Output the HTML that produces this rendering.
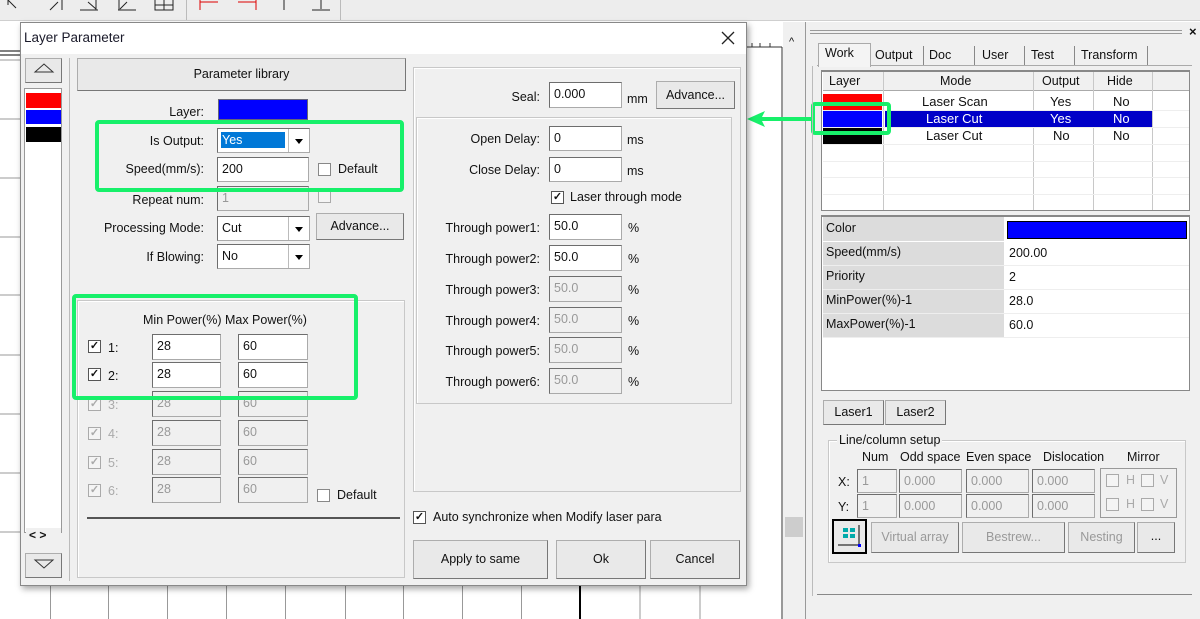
<!DOCTYPE html>
<html><head><meta charset="utf-8"><style>
*{box-sizing:border-box;margin:0;padding:0}
body{width:1200px;height:619px;overflow:hidden;background:#fff;font-family:"Liberation Sans",Tahoma,sans-serif;font-size:12.5px;color:#111;position:relative}
.a{position:absolute}
.in{position:absolute;background:#fff;border:1px solid #aaa;border-top-color:#6d6d6d;border-left-color:#6d6d6d;padding:2px 4px;font-size:12.5px;line-height:18px}
.dis{background:#f0f0f0;color:#999}
.btn{position:absolute;background:#e9e9e9;border:1px solid #adadad;border-right-color:#777;border-bottom-color:#777;text-align:center;font-size:12.5px}
.lbl{position:absolute;text-align:right;font-size:12.5px}
.cb{position:absolute;width:13px;height:13px;background:#fff;border:1px solid #555;font-size:11px;line-height:11px;text-align:center;font-weight:bold}
.cbd{border-color:#aaa;color:#aaa;background:#f4f4f4}
.grp{position:absolute;border:1px solid #c8c8c8;box-shadow:inset 1px 1px 0 #fff}
.green{position:absolute;border:4px solid #17f06a;border-radius:4px}
.sel:after{content:"";position:absolute;right:0;top:0;width:20px;height:100%;border-left:1px solid #bbb}
.arr{position:absolute;right:6px;top:10px;border:4px solid transparent;border-top:5px solid #000}
.vl{position:absolute;width:1px;background:#c8c8c8}
.hl{position:absolute;height:1px;background:#c8c8c8}
</style></head><body>
<!-- toolbar -->
<div class="a" style="left:0;top:0;width:1200px;height:21px;background:#ededed;border-bottom:1px solid #cfcfcf"></div>
<div class="a" style="left:186px;top:0;width:1px;height:20px;background:#bbb"></div>
<div class="a" style="left:340px;top:0;width:1px;height:20px;background:#bbb"></div>
<svg class="a" style="left:0;top:0" width="340" height="20"><g stroke="#222" fill="none" stroke-width="1"><path d="M8 0 L16 8 M8 0V5"/><path d="M50 10 L58 2 M62 0V10"/><path d="M80 10 H98 M96 0 V10 M88 2 L96 9"/><path d="M118 10 H136 M119 0V10 M127 2 L120 9"/><path d="M155 0 V10 H173 V0 M164 0 V10 M155 5 H173"/><path d="M200 0 V10 M200 2 H218" stroke="#d00"/><path d="M238 2 H256 M256 0 V10" stroke="#d00"/><path d="M284 0 V10"/><path d="M312 10 H330 M321 0 V9" /></g></svg>
<!-- canvas grid -->
<svg class="a" style="left:0;top:21px" width="810" height="598">
<g stroke="#999" stroke-width="1">
<path d="M0 39H20M0 98H20M0 157H20M0 216H20M0 274H20M0 334H20M0 393H20M0 452H20M0 511H20"/>
<path d="M50.5 565V598M108.5 565V598M167.5 565V598M226.5 565V598M285.5 565V598M345.5 565V598M403.5 565V598M462.5 565V598M521.5 565V598M640 565V598M700 565V598"/>
</g>
<path d="M580 565V598" stroke="#000" stroke-width="2"/>
<path d="M0 30H20M0 34H20" stroke="#000"/>
<path d="M747 26H782M782 26V598" stroke="#333"/>
<path d="M760 22V26M770 22V26M752 22V26" stroke="#333"/>
</g>
</svg>
<div class="a" style="left:783px;top:22px;width:22px;height:597px;background:#f0f0f0"></div>
<div class="a" style="left:789px;top:36px;font-size:11px">^</div>
<div class="a" style="left:785px;top:517px;width:18px;height:20px;background:#cdcdcd"></div>
<!-- right panel -->
<div class="a" style="left:805px;top:22px;width:395px;height:597px;background:#f0f0f0;border-left:1px solid #999"></div>
<div class="a" style="left:810px;top:30px;width:372px;height:4px;border-top:1px solid #999;border-bottom:1px solid #999"></div>
<div class="a" style="left:1189px;top:24px;font-weight:bold;font-size:13px">×</div>
<div class="a" style="left:817px;top:65px;width:375px;height:1px;background:#aaa"></div>
<div class="a" style="left:818px;top:43px;width:53px;height:24px;background:#f4f4f4;border:1px solid #aaa;border-bottom:none;padding:2px 6px">Work</div>
<div class="a" style="left:872px;top:46px;width:52px;height:19px;border-right:1px solid #888;padding:2px 3px">Output</div>
<div class="a" style="left:926px;top:46px;width:49px;height:19px;border-right:1px solid #888;padding:2px 3px">Doc</div>
<div class="a" style="left:977px;top:46px;width:48px;height:19px;border-right:1px solid #888;padding:2px 5px">User</div>
<div class="a" style="left:1027px;top:46px;width:48px;height:19px;border-right:1px solid #888;padding:2px 4px">Test</div>
<div class="a" style="left:1077px;top:46px;width:71px;height:19px;border-right:1px solid #888;padding:2px 4px">Transform</div>
<div class="a" style="left:821px;top:70px;width:369px;height:141px;background:#fff;border:1px solid #888;border-top:2px solid #888"></div>
<div class="a" style="left:823px;top:72px;width:366px;height:19px;background:#f0f0f0;border-bottom:1px solid #aaa"></div>
<div class="a" style="left:829px;top:74px">Layer</div><div class="a" style="left:940px;top:74px">Mode</div><div class="a" style="left:1042px;top:74px">Output</div><div class="a" style="left:1107px;top:74px">Hide</div>
<div class="vl" style="left:883px;top:72px;height:138px"></div><div class="vl" style="left:1033px;top:72px;height:138px"></div><div class="vl" style="left:1093px;top:72px;height:138px"></div><div class="vl" style="left:1152px;top:72px;height:138px"></div>
<div class="hl" style="left:823px;top:110px;width:366px;background:#eee"></div><div class="hl" style="left:823px;top:127px;width:366px;background:#eee"></div><div class="hl" style="left:823px;top:144px;width:366px;background:#eee"></div><div class="hl" style="left:823px;top:161px;width:366px;background:#eee"></div><div class="hl" style="left:823px;top:177px;width:366px;background:#eee"></div><div class="hl" style="left:823px;top:194px;width:366px;background:#eee"></div>
<div class="a" style="left:823px;top:94px;width:59px;height:16px;background:#f00"></div>
<div class="a" style="left:823px;top:111px;width:59px;height:16px;background:#00f"></div>
<div class="a" style="left:885px;top:111px;width:267px;height:16px;background:#0000c8"></div>
<div class="a" style="left:823px;top:128px;width:59px;height:16px;background:#000"></div>
<div class="a" style="left:922px;top:94px;font-size:13px">Laser Scan</div><div class="a" style="left:1050px;top:94px;font-size:13px">Yes</div><div class="a" style="left:1113px;top:94px;font-size:13px">No</div>
<div class="a" style="left:926px;top:111px;font-size:13px;color:#fff">Laser Cut</div><div class="a" style="left:1050px;top:111px;font-size:13px;color:#fff">Yes</div><div class="a" style="left:1113px;top:111px;font-size:13px;color:#fff">No</div>
<div class="a" style="left:926px;top:128px;font-size:13px">Laser Cut</div><div class="a" style="left:1053px;top:128px;font-size:13px">No</div><div class="a" style="left:1113px;top:128px;font-size:13px">No</div>
<div class="green" style="left:811px;top:102px;width:80px;height:33px"></div>
<div class="a" style="left:760px;top:117px;width:52px;height:4px;background:#17f06a"></div>
<svg class="a" style="left:747px;top:110px" width="20" height="18"><path d="M0 9 L18 1 L14 9 L18 17Z" fill="#17f06a"/></svg>
<div class="a" style="left:821px;top:215px;width:369px;height:176px;background:#fff;border:1px solid #888;border-top:2px solid #888"></div>
<div class="a" style="left:823px;top:217px;width:181px;height:120px;background:#dcdcdc"></div>
<div class="a" style="left:1007px;top:221px;width:180px;height:18px;background:#00f;border:1px solid #000"></div>
<div class="hl" style="left:823px;top:241px;width:366px;background:#fff"></div><div class="hl" style="left:823px;top:265px;width:366px;background:#eee"></div><div class="hl" style="left:823px;top:289px;width:366px;background:#eee"></div><div class="hl" style="left:823px;top:313px;width:366px;background:#eee"></div><div class="hl" style="left:823px;top:337px;width:366px;background:#eee"></div>
<div class="a" style="left:826px;top:221px">Color</div>
<div class="a" style="left:826px;top:245px">Speed(mm/s)</div><div class="a" style="left:1009px;top:246px">200.00</div>
<div class="a" style="left:826px;top:269px">Priority</div><div class="a" style="left:1009px;top:270px">2</div>
<div class="a" style="left:826px;top:293px">MinPower(%)-1</div><div class="a" style="left:1009px;top:294px">28.0</div>
<div class="a" style="left:826px;top:317px">MaxPower(%)-1</div><div class="a" style="left:1009px;top:318px">60.0</div>
<div class="btn" style="left:823px;top:400px;width:61px;height:25px;line-height:23px">Laser1</div>
<div class="btn" style="left:885px;top:400px;width:61px;height:25px;line-height:23px">Laser2</div>
<div class="grp" style="left:828px;top:440px;width:358px;height:123px"></div>
<div class="a" style="left:837px;top:433px;background:#f0f0f0;padding:0 2px">Line/column setup</div>
<div class="a" style="left:862px;top:450px">Num</div><div class="a" style="left:900px;top:450px">Odd space</div><div class="a" style="left:966px;top:450px">Even space</div><div class="a" style="left:1043px;top:450px">Dislocation</div><div class="a" style="left:1127px;top:450px">Mirror</div>
<div class="a" style="left:838px;top:475px">X:</div><div class="a" style="left:838px;top:500px">Y:</div>
<div class="in dis" style="left:857px;top:469px;width:40px;height:24px">1</div><div class="in dis" style="left:899px;top:469px;width:63px;height:24px">0.000</div><div class="in dis" style="left:966px;top:469px;width:63px;height:24px">0.000</div><div class="in dis" style="left:1032px;top:469px;width:63px;height:24px">0.000</div>
<div class="in dis" style="left:857px;top:494px;width:40px;height:24px">1</div><div class="in dis" style="left:899px;top:494px;width:63px;height:24px">0.000</div><div class="in dis" style="left:966px;top:494px;width:63px;height:24px">0.000</div><div class="in dis" style="left:1032px;top:494px;width:63px;height:24px">0.000</div>
<div class="a" style="left:1100px;top:468px;width:77px;height:50px;border:1px solid #999"></div>
<div class="cb cbd" style="left:1106px;top:474px"></div><div class="a" style="left:1126px;top:473px;color:#aaa">H</div><div class="cb cbd" style="left:1141px;top:474px"></div><div class="a" style="left:1160px;top:473px;color:#aaa">V</div>
<div class="cb cbd" style="left:1106px;top:498px"></div><div class="a" style="left:1126px;top:497px;color:#aaa">H</div><div class="cb cbd" style="left:1141px;top:498px"></div><div class="a" style="left:1160px;top:497px;color:#aaa">V</div>
<div class="a" style="left:832px;top:519px;width:35px;height:35px;border:2px solid #000;background:#e9e9e9"><svg width="31" height="31"><g fill="#0aa"><rect x="9" y="7" width="5" height="4"/><rect x="16" y="7" width="5" height="4"/><rect x="9" y="13" width="5" height="4"/><rect x="16" y="13" width="5" height="4"/></g><path d="M4 24H26M25 4V24" stroke="#000"/><rect x="24" y="23" width="3" height="3" fill="#00f"/></svg></div>
<div class="btn" style="left:871px;top:522px;width:88px;height:31px;line-height:29px;color:#999">Virtual array</div>
<div class="btn" style="left:962px;top:522px;width:103px;height:31px;line-height:29px;color:#999">Bestrew...</div>
<div class="btn" style="left:1068px;top:522px;width:67px;height:31px;line-height:29px;color:#999">Nesting</div>
<div class="btn" style="left:1137px;top:522px;width:38px;height:31px;line-height:27px">...</div>
<div class="a" style="left:817px;top:594px;width:375px;height:1px;background:#888"></div>
<div class="a" style="left:812px;top:66px;width:1px;height:530px;background:#bbb"></div>

<!-- dialog -->
<div class="a" style="left:20px;top:22px;width:727px;height:564px;background:#f0f0f0;border:1px solid #888;box-shadow:2px 3px 6px rgba(0,0,0,.35)"></div>
<div class="a" style="left:21px;top:23px;width:725px;height:31px;background:#fff"></div>
<div class="a" style="left:24px;top:30px;font-size:13.5px;color:#1a1a2a">Layer Parameter</div>
<svg class="a" style="left:721px;top:31px" width="14" height="14"><path d="M1 1L13 13M13 1L1 13" stroke="#222" stroke-width="1.3"/></svg>
<div class="btn" style="left:25px;top:58px;width:37px;height:25px"><svg width="30" height="20"><path d="M6 13H24L15 5Z" fill="none" stroke="#333"/></svg></div>
<div class="a" style="left:24px;top:88px;width:38px;height:445px;background:#fff;border:1px solid #999"></div>
<div class="a" style="left:26px;top:93px;width:35px;height:15px;background:#f00"></div>
<div class="a" style="left:26px;top:110px;width:35px;height:14px;background:#00f"></div>
<div class="a" style="left:26px;top:127px;width:35px;height:15px;background:#000"></div>
<div class="a" style="left:26px;top:528px;width:35px;height:16px;background:#f0f0f0;font-size:12px;font-weight:bold;padding-left:3px">&lt; &gt;</div>
<div class="btn" style="left:25px;top:553px;width:37px;height:25px"><svg width="30" height="20"><path d="M6 6H24L15 14Z" fill="none" stroke="#333"/></svg></div>
<div class="vl" style="left:69px;top:58px;height:523px;background:#bbb"></div>
<div class="btn" style="left:77px;top:58px;width:329px;height:33px;line-height:31px">Parameter library</div>
<div class="lbl" style="left:100px;width:104px;top:105px">Layer:</div>
<div class="a" style="left:218px;top:99px;width:90px;height:21px;background:#00f;border:1px solid #667"></div>
<div class="lbl" style="left:100px;width:104px;top:134px">Is Output:</div>
<div class="in sel" style="left:217px;top:128px;width:93px;height:25px;padding:0"><div class="a" style="left:3px;top:3px;width:64px;height:16px;background:#0078d7;color:#fff;padding-left:1px;line-height:16px">Yes</div><div class="arr"></div></div>
<div class="lbl" style="left:90px;width:114px;top:162px">Speed(mm/s):</div>
<div class="in" style="left:217px;top:157px;width:92px;height:25px">200</div>
<div class="cb" style="left:318px;top:163px;border-color:#888"></div><div class="a" style="left:338px;top:162px">Default</div>
<div class="lbl" style="left:90px;width:114px;top:193px">Repeat num:</div>
<div class="in dis" style="left:217px;top:186px;width:92px;height:25px">1</div>
<div class="cb cbd" style="left:318px;top:190px"></div>
<div class="lbl" style="left:80px;width:124px;top:221px">Processing Mode:</div>
<div class="in sel" style="left:217px;top:216px;width:93px;height:25px">Cut<div class="arr"></div></div>
<div class="btn" style="left:316px;top:213px;width:88px;height:27px;line-height:25px">Advance...</div>
<div class="lbl" style="left:90px;width:114px;top:250px">If Blowing:</div>
<div class="in sel" style="left:217px;top:244px;width:93px;height:25px">No<div class="arr"></div></div>
<div class="green" style="left:95px;top:120px;width:309px;height:72px"></div>
<!-- power group -->
<div class="grp" style="left:77px;top:300px;width:328px;height:278px"></div>
<div class="a" style="left:143px;top:313px">Min Power(%) Max Power(%)</div>
<div class="cb" style="left:88px;top:340px">✓</div><div class="a" style="left:108px;top:341px">1:</div>
<div class="in" style="left:152px;top:334px;width:69px;height:26px">28</div><div class="in" style="left:238px;top:334px;width:70px;height:26px">60</div>
<div class="cb" style="left:88px;top:368px">✓</div><div class="a" style="left:108px;top:369px">2:</div>
<div class="in" style="left:152px;top:362px;width:69px;height:26px">28</div><div class="in" style="left:238px;top:362px;width:70px;height:26px">60</div>
<div class="cb cbd" style="left:88px;top:398px">✓</div><div class="a" style="left:108px;top:398px;color:#aaa">3:</div>
<div class="in dis" style="left:152px;top:391px;width:69px;height:26px">28</div><div class="in dis" style="left:238px;top:391px;width:70px;height:26px">60</div>
<div class="cb cbd" style="left:88px;top:427px">✓</div><div class="a" style="left:108px;top:427px;color:#aaa">4:</div>
<div class="in dis" style="left:152px;top:420px;width:69px;height:26px">28</div><div class="in dis" style="left:238px;top:420px;width:70px;height:26px">60</div>
<div class="cb cbd" style="left:88px;top:456px">✓</div><div class="a" style="left:108px;top:456px;color:#aaa">5:</div>
<div class="in dis" style="left:152px;top:449px;width:69px;height:26px">28</div><div class="in dis" style="left:238px;top:449px;width:70px;height:26px">60</div>
<div class="cb cbd" style="left:88px;top:484px">✓</div><div class="a" style="left:108px;top:484px;color:#aaa">6:</div>
<div class="in dis" style="left:152px;top:477px;width:69px;height:26px">28</div><div class="in dis" style="left:238px;top:477px;width:70px;height:26px">60</div>
<div class="cb" style="left:317px;top:489px;border-color:#888"></div><div class="a" style="left:337px;top:488px">Default</div>
<div class="a" style="left:87px;top:517px;width:313px;height:2px;background:#555"></div>
<div class="green" style="left:72px;top:294px;width:286px;height:106px"></div>
<!-- right group -->
<div class="grp" style="left:413px;top:67px;width:328px;height:425px"></div>
<div class="lbl" style="left:480px;width:60px;top:90px">Seal:</div>
<div class="in" style="left:549px;top:82px;width:73px;height:26px">0.000</div><div class="a" style="left:627px;top:92px">mm</div>
<div class="btn" style="left:656px;top:81px;width:79px;height:28px;line-height:26px">Advance...</div>
<div class="grp" style="left:416px;top:117px;width:316px;height:287px"></div>
<div class="lbl" style="left:440px;width:100px;top:132px">Open Delay:</div>
<div class="in" style="left:549px;top:126px;width:73px;height:25px">0</div><div class="a" style="left:627px;top:133px">ms</div>
<div class="lbl" style="left:440px;width:100px;top:163px">Close Delay:</div>
<div class="in" style="left:549px;top:157px;width:73px;height:25px">0</div><div class="a" style="left:627px;top:164px">ms</div>
<div class="cb" style="left:551px;top:191px">✓</div><div class="a" style="left:570px;top:190px">Laser through mode</div>
<div class="lbl" style="left:420px;width:120px;top:221px">Through power1:</div><div class="in" style="left:549px;top:214px;width:73px;height:26px">50.0</div><div class="a" style="left:628px;top:221px">%</div>
<div class="lbl" style="left:420px;width:120px;top:252px">Through power2:</div><div class="in" style="left:549px;top:245px;width:73px;height:26px">50.0</div><div class="a" style="left:628px;top:252px">%</div>
<div class="lbl" style="left:420px;width:120px;top:283px">Through power3:</div><div class="in dis" style="left:549px;top:276px;width:73px;height:26px">50.0</div><div class="a" style="left:628px;top:283px">%</div>
<div class="lbl" style="left:420px;width:120px;top:314px">Through power4:</div><div class="in dis" style="left:549px;top:307px;width:73px;height:26px">50.0</div><div class="a" style="left:628px;top:314px">%</div>
<div class="lbl" style="left:420px;width:120px;top:344px">Through power5:</div><div class="in dis" style="left:549px;top:337px;width:73px;height:26px">50.0</div><div class="a" style="left:628px;top:344px">%</div>
<div class="lbl" style="left:420px;width:120px;top:375px">Through power6:</div><div class="in dis" style="left:549px;top:368px;width:73px;height:26px">50.0</div><div class="a" style="left:628px;top:375px">%</div>
<div class="cb" style="left:413px;top:511px">✓</div><div class="a" style="left:433px;top:510px">Auto synchronize when Modify laser para</div>
<div class="btn" style="left:413px;top:540px;width:135px;height:39px;line-height:37px">Apply to same</div>
<div class="btn" style="left:556px;top:540px;width:90px;height:39px;line-height:37px">Ok</div>
<div class="btn" style="left:650px;top:540px;width:90px;height:39px;line-height:37px">Cancel</div>
</body></html>
